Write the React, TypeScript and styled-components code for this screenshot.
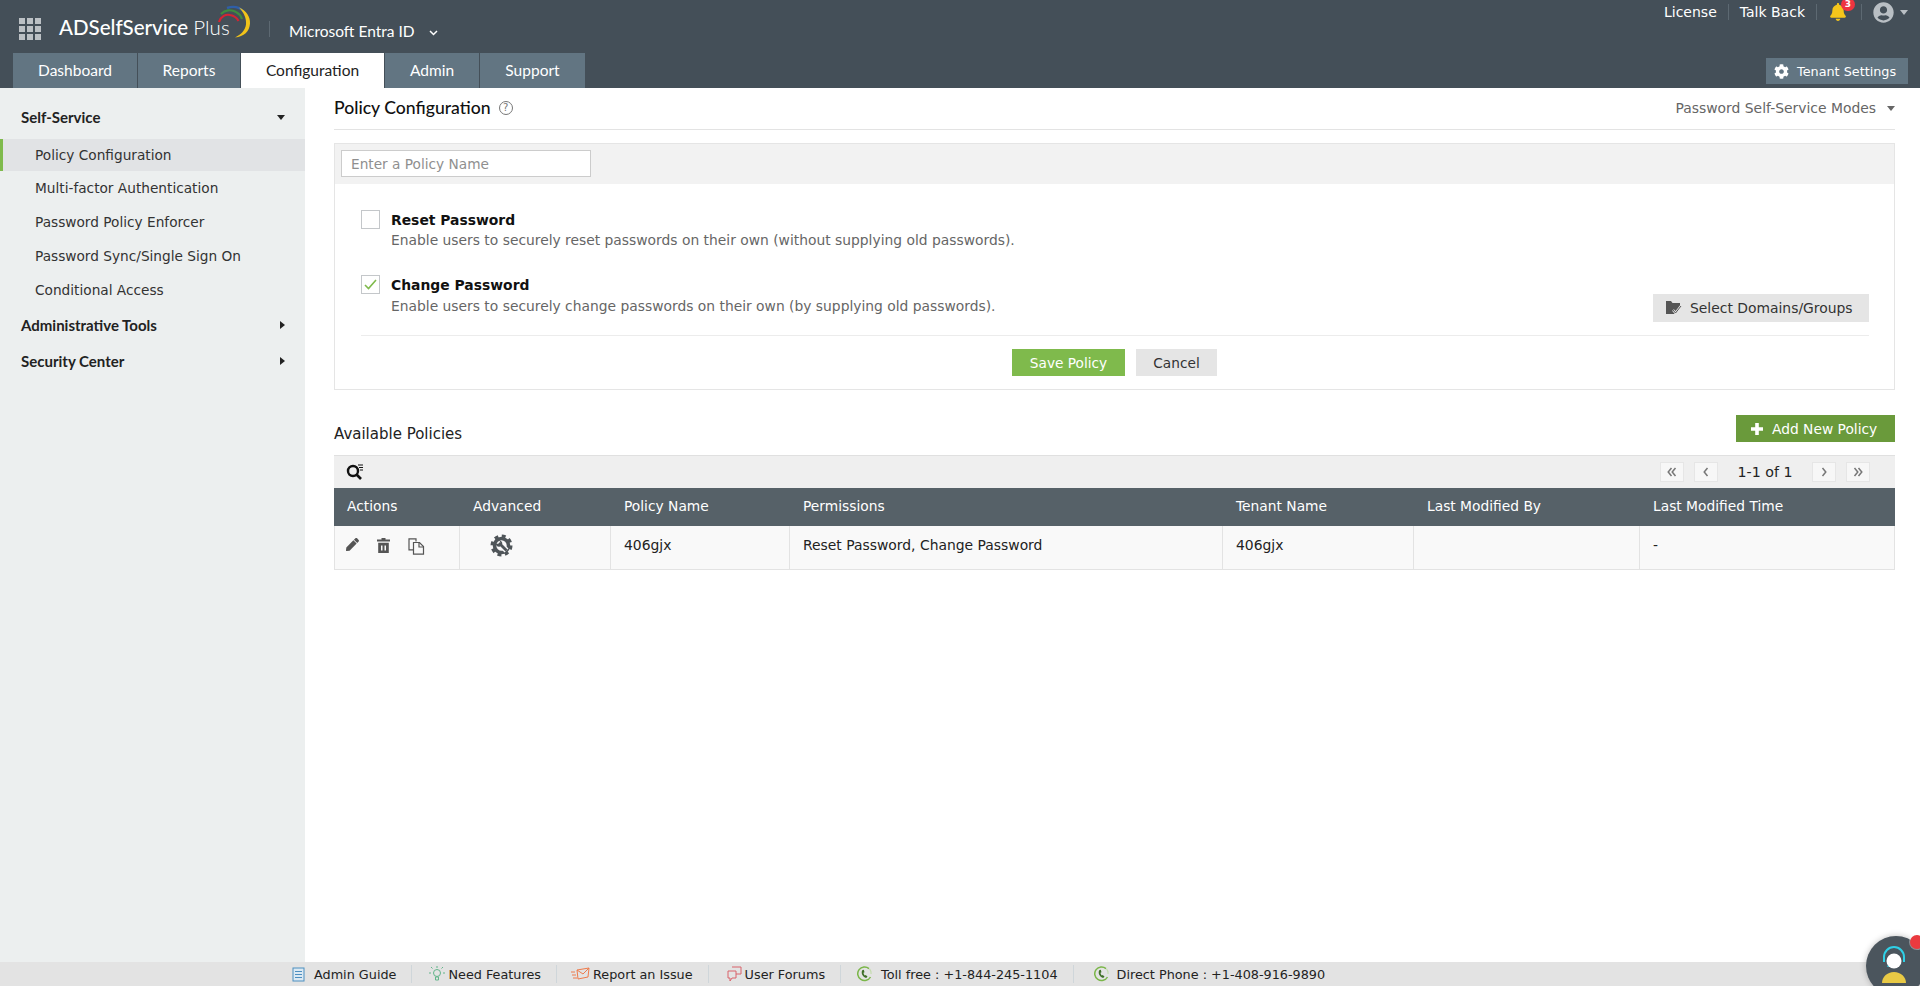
import React from 'react'
import styled, { createGlobalStyle } from 'styled-components'
import { FaCog, FaPen, FaBell, FaUserCircle } from 'react-icons/fa'

const BODY_FONT = `"DejaVu Sans", Verdana, sans-serif`
const HEAD_FONT = `Lato, "Open Sans", sans-serif`

const GlobalStyle = createGlobalStyle`
  html, body { margin: 0; padding: 0; height: 100%; background: #fff; overflow: hidden; }
  #root { height: 100%; }
  * { box-sizing: border-box; }
  body { font-family: ${BODY_FONT}; font-size: 13.8px; color: #222; }
`

const Page = styled.div`
  height: 986px;
  display: flex;
  flex-direction: column;
  position: relative;
  overflow: hidden;
`

const Header = styled.header`
  height: 88px;
  background: #444f58;
  display: flex;
  flex-direction: column;
  flex-shrink: 0;
`

const HeaderTop = styled.div`
  height: 53px;
  display: flex;
  align-items: flex-start;
  padding-left: 19px;
`

const AppGrid = styled.div`
  width: 22px;
  height: 22px;
  margin-top: 18px;
  display: grid;
  grid-template-columns: repeat(3, 6px);
  grid-auto-rows: 6px;
  gap: 2px;
  span { background: #bcc1c5; }
`

const LogoWrap = styled.div`
  position: relative;
  margin-left: 18px;
  width: 194px;
  height: 53px;
`

const LogoText = styled.span`
  position: absolute;
  left: 0;
  top: 14px;
  font-family: ${HEAD_FONT};
  font-size: 20.5px;
  line-height: 26px;
  color: #fff;
  white-space: nowrap;
  font-weight: 500;
  em { font-style: normal; font-weight: 300; }
`

const LogoArc = styled.svg`
  position: absolute;
  left: 159px;
  top: 5px;
`

const HeaderSep = styled.div`
  width: 1px;
  height: 16px;
  background: #5d6972;
  margin: 21px 19px 0 16px;
`

const Product = styled.div`
  margin-top: 19px;
  display: flex;
  align-items: center;
  gap: 14px;
  font-family: ${HEAD_FONT};
  font-size: 15.5px;
  line-height: 24px;
  color: #fff;
  svg { margin-top: 3px; }
`

const TopLinks = styled.div`
  margin-left: auto;
  height: 24px;
  padding-right: 12px;
  display: flex;
  align-items: center;
  color: #fff;
  font-size: 14px;
`

const TopLink = styled.span`
  padding: 0 11px 0 11px;
  line-height: 16px;
  border-right: 1px solid #5d6972;
  white-space: nowrap;
`

const BellWrap = styled.span`
  position: relative;
  width: 45px;
  height: 16px;
  padding-left: 12px;
  border-right: 1px solid #5d6972;
  color: #f5c61b;
  font-size: 18px;
  display: flex;
  align-items: center;
`

const Badge = styled.span`
  position: absolute;
  left: 24px;
  top: -6px;
  width: 14px;
  height: 13px;
  border-radius: 7px;
  background: #ee3440;
  color: #fff;
  font-size: 9px;
  font-weight: 700;
  line-height: 13px;
  text-align: center;
`

const UserWrap = styled.span`
  display: flex;
  align-items: center;
  gap: 6px;
  margin-left: 11px;
  color: #b9bfc4;
`

const TabRow = styled.nav`
  height: 35px;
  display: flex;
  padding: 0 12px 0 13px;
`

const Tab = styled.div<{ $w: number; $active?: boolean }>`
  width: ${(p) => p.$w}px;
  margin-right: 1px;
  padding-bottom: 2px;
  display: flex;
  align-items: center;
  justify-content: center;
  font-family: ${HEAD_FONT};
  font-size: 15.5px;
  background: ${(p) => (p.$active ? '#fff' : '#627582')};
  color: ${(p) => (p.$active ? '#222' : '#fff')};
`

const TenantButton = styled.div`
  margin: 5px 0 4px auto;
  width: 142px;
  display: flex;
  align-items: center;
  gap: 8px;
  padding-left: 8px;
  background: #627582;
  color: #fff;
  font-size: 12.8px;
  white-space: nowrap;
`

const Body = styled.div`
  flex: 1;
  display: flex;
  min-height: 0;
`

const Sidebar = styled.aside`
  width: 305px;
  background: #ecefef;
  flex-shrink: 0;
  padding-top: 11px;
`

const SectionHead = styled.div<{ $mt?: number }>`
  height: 36px;
  margin-top: ${(p) => p.$mt ?? 0}px;
  padding: 0 20px 0 21px;
  display: flex;
  align-items: center;
  justify-content: space-between;
  font-family: ${HEAD_FONT};
  font-weight: 700;
  font-size: 15px;
  color: #222;
`

const Caret = styled.span<{ $dir: 'down' | 'right'; $color?: string }>`
  width: 0;
  height: 0;
  ${(p) =>
    p.$dir === 'down'
      ? `border-left: 4px solid transparent; border-right: 4px solid transparent; border-top: 5px solid ${p.$color ?? '#222'};`
      : `border-top: 4px solid transparent; border-bottom: 4px solid transparent; border-left: 5px solid ${p.$color ?? '#222'};`}
`

const MenuItem = styled.div<{ $active?: boolean }>`
  height: ${(p) => (p.$active ? '32px' : '34px')};
  margin-top: ${(p) => (p.$active ? '4px' : '0')};
  display: flex;
  align-items: center;
  padding-left: ${(p) => (p.$active ? '32px' : '35px')};
  font-size: 13.7px;
  color: #333;
  background: ${(p) => (p.$active ? '#e1e3e5' : 'transparent')};
  border-left: ${(p) => (p.$active ? '3px solid #7fba4c' : '0')};
`

const Main = styled.main`
  flex: 1;
  padding: 0 25px 0 29px;
  min-width: 0;
`

const TitleRow = styled.div`
  height: 42px;
  border-bottom: 1px solid #e3e3e3;
  display: flex;
  align-items: center;
  padding-bottom: 3px;
`

const Title = styled.h1`
  margin: 0;
  font-family: ${HEAD_FONT};
  font-size: 17.6px;
  font-weight: 500;
  color: #111;
`

const HelpIcon = styled.span`
  width: 14px;
  height: 14px;
  margin: 2px 0 0 8px;
  border: 1px solid #777;
  border-radius: 50%;
  font-size: 10px;
  line-height: 12px;
  text-align: center;
  color: #777;
`

const ModeSwitch = styled.div`
  margin: 2px 0 0 auto;
  display: flex;
  align-items: center;
  gap: 11px;
  font-size: 13.9px;
  color: #666;
`

const FormPanel = styled.section`
  margin-top: 13px;
  height: 247px;
  border: 1px solid #e5e5e5;
`

const NameBar = styled.div`
  height: 40px;
  background: #f2f2f2;
  padding: 6px;
`

const NameInput = styled.input`
  display: block;
  width: 250px;
  height: 27px;
  border: 1px solid #ccc;
  background: #fff;
  padding: 0 9px;
  font-family: ${BODY_FONT};
  font-size: 13.7px;
  &::placeholder { color: #8f8f8f; opacity: 1; }
`

const FormBody = styled.div`
  padding: 26px 25px 0 26px;
`

const Option = styled.div<{ $h: number }>`
  height: ${(p) => p.$h}px;
  display: flex;
`

const CheckBox = styled.span`
  width: 19px;
  height: 19px;
  border: 1px solid #c4c7ca;
  background: #fff;
  flex-shrink: 0;
  margin-right: 11px;
  display: flex;
  align-items: center;
  justify-content: center;
`

const OptionLabel = styled.div`
  font-weight: 700;
  font-size: 13.9px;
  line-height: 20px;
  color: #111;
`

const OptionDesc = styled.div<{ $mt?: number }>`
  margin-top: ${(p) => p.$mt ?? 0}px;
  font-size: 13.85px;
  line-height: 20px;
  color: #666;
  white-space: nowrap;
`

const SelectButton = styled.div`
  margin: 0 0 1px auto;
  align-self: flex-end;
  width: 216px;
  height: 28px;
  background: #e5e5e5;
  display: flex;
  align-items: center;
  gap: 8px;
  padding-left: 13px;
  font-size: 13.9px;
  color: #333;
  white-space: nowrap;
`

const Divider = styled.div`
  height: 1px;
  background: #ececec;
  margin-top: 12px;
`

const FormActions = styled.div`
  margin-top: 13px;
  display: flex;
  justify-content: center;
  gap: 11px;
  padding-right: 1px;
`

const ActionButton = styled.div<{ $w: number; $primary?: boolean }>`
  width: ${(p) => p.$w}px;
  height: 27px;
  display: flex;
  align-items: center;
  justify-content: center;
  font-size: 13.7px;
  background: ${(p) => (p.$primary ? '#7fba4c' : '#e5e5e5')};
  color: ${(p) => (p.$primary ? '#fff' : '#333')};
`

const ListHead = styled.div`
  margin-top: 25px;
  height: 27px;
  display: flex;
  justify-content: space-between;
  align-items: flex-end;
`

const ListTitle = styled.h2`
  margin: 0 0 -2px;
  font-size: 15px;
  font-weight: 400;
  line-height: 20px;
  color: #222;
`

const AddButton = styled.div`
  width: 159px;
  height: 27px;
  background: #6a9a3b;
  color: #fff;
  display: flex;
  align-items: center;
  gap: 9px;
  padding-left: 15px;
  font-size: 13.8px;
  white-space: nowrap;
`

const TableBar = styled.div`
  margin-top: 13px;
  height: 33px;
  background: #efefef;
  border-top: 1px solid #e0e0e0;
  display: flex;
  align-items: center;
  padding: 0 25px 0 12px;
`

const Pager = styled.div`
  margin-left: auto;
  display: flex;
  align-items: center;
  gap: 10px;
`

const PageButton = styled.span`
  width: 24px;
  height: 20px;
  background: #f7f7f7;
  border: 1px solid #e6e6e6;
  color: #777;
  display: flex;
  align-items: center;
  justify-content: center;
`

const PageInfo = styled.span`
  width: 74px;
  text-align: center;
  font-size: 14.2px;
  color: #222;
`

const HeadRow = styled.div`
  display: grid;
  grid-template-columns: 126px 151px 179px 433px 191px 226px 255px;
  height: 38px;
  padding-bottom: 2px;
  background: #566168;
  color: #fff;
  font-size: 13.8px;
  align-items: center;
`

const HeadCell = styled.div`
  padding-left: 13px;
  white-space: nowrap;
`

const DataRow = styled.div`
  display: grid;
  grid-template-columns: 125px 151px 179px 433px 191px 226px 254px;
  height: 44px;
  background: #f9f9f9;
  border-bottom: 1px solid #e3e3e3;
  border-left: 1px solid #e3e3e3;
  border-right: 1px solid #e3e3e3;
  font-size: 13.9px;
  color: #222;
`

const DataCell = styled.div<{ $last?: boolean }>`
  padding: 9px 0 0 13px;
  line-height: 20px;
  border-right: ${(p) => (p.$last ? '0' : '1px solid #e3e3e3')};
  white-space: nowrap;
`

const ActionCell = styled.div`
  padding: 12px 0 0 11px;
  display: flex;
  gap: 18px;
  color: #555;
  border-right: 1px solid #e3e3e3;
  align-items: flex-start;
`

const AdvancedCell = styled.div`
  padding: 8px 0 0 30px;
  border-right: 1px solid #e3e3e3;
`

const Footer = styled.footer`
  height: 24px;
  background: #e3e3e3;
  flex-shrink: 0;
  display: flex;
  align-items: center;
  padding-left: 292px;
  font-size: 12.8px;
  color: #222;
`

const FootItem = styled.div<{ $gap: number; $pr: number; $ml: number; $last?: boolean }>`
  display: flex;
  align-items: center;
  gap: ${(p) => p.$gap}px;
  padding-right: ${(p) => p.$pr}px;
  margin-right: ${(p) => p.$ml}px;
  height: 18px;
  white-space: nowrap;
  border-right: ${(p) => (p.$last ? '0' : '1px solid #cfd6da')};
`

const ChatBubble = styled.div`
  position: absolute;
  left: 1866px;
  top: 936px;
  width: 60px;
  height: 60px;
  border-radius: 50%;
  background: #4b555d;
  box-shadow: 0 0 6px rgba(0, 0, 0, 0.25);
  overflow: hidden;
`

const ChatDot = styled.span`
  position: absolute;
  left: 1910px;
  top: 935px;
  width: 14px;
  height: 14px;
  border-radius: 50%;
  background: #ea3a3f;
  box-shadow: 0 0 0 1px rgba(255, 255, 255, 0.35);
`

const PhoneIcon = () => (
  <svg width="15" height="16" viewBox="0 0 15 16" fill="none">
    <path d="M12 2.600A6.800 6.800 0 1 0 13.500 11" stroke="#7ab648" strokeWidth="1.500" />
    <path d="M12.500 2.800A6.800 6.800 0 0 1 14 8" stroke="#c4dcae" strokeWidth="1.200" />
    <path d="M5.200 4.200c-1 1.800-.5 4 .9 5.800 1 1.200 2.300 2 3.500 1.700l.9-1.300-1.800-1.400-.8.5c-.8-.6-1.300-1.800-1.400-2.800l1-.5-.7-2.400z" fill="#3f6f28" />
  </svg>
)

const ChevronPair = ({ dir }: { dir: 'left' | 'right' }) => (
  <svg width="10" height="10" viewBox="0 0 10 10" fill="none" stroke="#777" strokeWidth="1.500">
    {dir === 'left' ? (
      <>
        <path d="M4.500 1 1.200 5l3.300 4" />
        <path d="M8.500 1 5.200 5l3.300 4" />
      </>
    ) : (
      <>
        <path d="M1.500 1 4.800 5 1.500 9" />
        <path d="M5.500 1 8.800 5 5.500 9" />
      </>
    )}
  </svg>
)

const Chevron = ({ dir }: { dir: 'left' | 'right' }) => (
  <svg width="8" height="10" viewBox="0 0 8 10" fill="none" stroke="#777" strokeWidth="1.500">
    <path d={dir === 'left' ? 'M5.500 1 2.200 5l3.300 4' : 'M2.500 1 5.800 5 2.500 9'} />
  </svg>
)

const menuItems = ['Policy Configuration', 'Multi-factor Authentication', 'Password Policy Enforcer', 'Password Sync/Single Sign On', 'Conditional Access']

const columns = ['Actions', 'Advanced', 'Policy Name', 'Permissions', 'Tenant Name', 'Last Modified By', 'Last Modified Time']

export default function App() {
  return (
    <Page>
      <GlobalStyle />
      <Header>
        <HeaderTop>
          <AppGrid>
            {Array.from({ length: 9 }).map((_, i) => (
              <span key={i} />
            ))}
          </AppGrid>
          <LogoWrap>
            <LogoText>
              ADSelfService <em>Plus</em>
            </LogoText>
            <LogoArc width="36" height="36" viewBox="0 0 36 36" fill="none">
              <path d="M1 17C3 11 8 9 12 10c4 .6 7 3 8.500 6" stroke="#d32433" strokeWidth="2.200" />
              <path d="M3 9c4-4 10-5 15-2 3 1.500 5 4 6 7" stroke="#3f8c3f" strokeWidth="2.200" />
              <path d="M9 3c6-2 12-1 16 3 3 3 4 6 4 9" stroke="#2f5fa8" strokeWidth="2.400" />
              <path d="M21 2.500c7 3 11.500 9 11 16-.500 8-6 13-15 14 6-3 10-7 11-13 .6-6-2-12-7-17z" fill="#f1c31a" />
            </LogoArc>
          </LogoWrap>
          <HeaderSep />
          <Product>
            Microsoft Entra ID
            <svg width="9" height="6" viewBox="0 0 9 6" fill="none" stroke="#fff" strokeWidth="1.500">
              <path d="M1 1l3.500 3.500L8 1" />
            </svg>
          </Product>
          <TopLinks>
            <TopLink>License</TopLink>
            <TopLink>Talk Back</TopLink>
            <BellWrap>
              <FaBell />
              <Badge>3</Badge>
            </BellWrap>
            <UserWrap>
              <FaUserCircle size={21} />
              <Caret $dir="down" $color="#b9bfc4" />
            </UserWrap>
          </TopLinks>
        </HeaderTop>
        <TabRow>
          <Tab $w={124}>Dashboard</Tab>
          <Tab $w={102}>Reports</Tab>
          <Tab $w={143} $active>
            Configuration
          </Tab>
          <Tab $w={94}>Admin</Tab>
          <Tab $w={105}>Support</Tab>
          <TenantButton>
            <FaCog size={15} />
            Tenant Settings
          </TenantButton>
        </TabRow>
      </Header>
      <Body>
        <Sidebar>
          <SectionHead>
            Self-Service
            <Caret $dir="down" />
          </SectionHead>
          {menuItems.map((label, i) => (
            <MenuItem key={label} $active={i === 0}>
              {label}
            </MenuItem>
          ))}
          <SectionHead>
            Administrative Tools
            <Caret $dir="right" />
          </SectionHead>
          <SectionHead>
            Security Center
            <Caret $dir="right" />
          </SectionHead>
        </Sidebar>
        <Main>
          <TitleRow>
            <Title>Policy Configuration</Title>
            <HelpIcon>?</HelpIcon>
            <ModeSwitch>
              Password Self-Service Modes
              <Caret $dir="down" $color="#666" />
            </ModeSwitch>
          </TitleRow>
          <FormPanel>
            <NameBar>
              <NameInput placeholder="Enter a Policy Name" />
            </NameBar>
            <FormBody>
              <Option $h={65}>
                <CheckBox />
                <div>
                  <OptionLabel>Reset Password</OptionLabel>
                  <OptionDesc>Enable users to securely reset passwords on their own (without supplying old passwords).</OptionDesc>
                </div>
              </Option>
              <Option $h={48}>
                <CheckBox>
                  <svg width="13" height="11" viewBox="0 0 13 11" fill="none" stroke="#7fba4c" strokeWidth="1.600">
                    <path d="M1 6l3.500 3.500L12 1" />
                  </svg>
                </CheckBox>
                <div>
                  <OptionLabel>Change Password</OptionLabel>
                  <OptionDesc $mt={1}>Enable users to securely change passwords on their own (by supplying old passwords).</OptionDesc>
                </div>
                <SelectButton>
                  <svg width="16" height="14" viewBox="0 0 16 14">
                    <path d="M0 0h5l1.500 2H14v5l-5 6H0z" fill="#555" />
                    <path d="M7 9l2.500 3L15 5" stroke="#e5e5e5" strokeWidth="2.400" fill="none" />
                    <path d="M7 9l2.500 3L15 5" stroke="#555" strokeWidth="1" fill="none" />
                  </svg>
                  Select Domains/Groups
                </SelectButton>
              </Option>
              <Divider />
              <FormActions>
                <ActionButton $w={113} $primary>
                  Save Policy
                </ActionButton>
                <ActionButton $w={81}>Cancel</ActionButton>
              </FormActions>
            </FormBody>
          </FormPanel>
          <ListHead>
            <ListTitle>Available Policies</ListTitle>
            <AddButton>
              <svg width="12" height="12" viewBox="0 0 12 12" fill="#fff">
                <path d="M4.200 0h3.600v4.200H12v3.600H7.800V12H4.200V7.800H0V4.200h4.200z" />
              </svg>
              Add New Policy
            </AddButton>
          </ListHead>
          <TableBar>
            <svg width="18" height="18" viewBox="0 0 18 18" fill="none">
              <circle cx="7" cy="8" r="5" stroke="#111" strokeWidth="2.400" />
              <path d="M10.500 11.500 15 16" stroke="#111" strokeWidth="2.600" />
              <path d="M12 2h5M13 4.500h4M14 7h3" stroke="#111" strokeWidth="1" />
            </svg>
            <Pager>
              <PageButton>
                <ChevronPair dir="left" />
              </PageButton>
              <PageButton>
                <Chevron dir="left" />
              </PageButton>
              <PageInfo>1-1 of 1</PageInfo>
              <PageButton>
                <Chevron dir="right" />
              </PageButton>
              <PageButton>
                <ChevronPair dir="right" />
              </PageButton>
            </Pager>
          </TableBar>
          <HeadRow>
            {columns.map((c) => (
              <HeadCell key={c}>{c}</HeadCell>
            ))}
          </HeadRow>
          <DataRow>
            <ActionCell>
              <FaPen size={13} />
              <svg width="13" height="15" viewBox="0 0 13 15" fill="#555">
                <path d="M4.500 0h4v1.500H13V3.500H0V1.500h4.500z" />
                <path d="M1.200 4.800h10.600V15H1.200zM4 7.500v5h1.500v-5zM7.500 7.500v5H9v-5z" fillRule="evenodd" />
              </svg>
              <svg width="17" height="17" viewBox="0 0 17 17" fill="none" stroke="#555" strokeWidth="1.200">
                <path d="M8 3.500V.8H1v11h4" />
                <path d="M5.500 4.500h6l4 4v7.700H5.500z" />
                <path d="M11 4.500V9h4.500" />
              </svg>
            </ActionCell>
            <AdvancedCell>
              <svg width="23" height="23" viewBox="0 0 23 23" fill="none">
                <circle cx="11.500" cy="11.500" r="7" stroke="#4f5559" strokeWidth="3.600" />
                <circle cx="11.500" cy="11.500" r="9.500" stroke="#4f5559" strokeWidth="3" strokeDasharray="3.900 3.560" />
                <path d="M8.500 8.500l8 8" stroke="#f9f9f9" strokeWidth="5.400" />
                <path d="M9 9l7.500 7.500" stroke="#4f5559" strokeWidth="2.800" />
                <path d="M5.500 9.500c.5 2.500 3 4 4.500 3l2-2c1-1.500-.5-4-3-4.500l1.500 2.500-1.500 1.500z" fill="#4f5559" />
              </svg>
            </AdvancedCell>
            <DataCell>406gjx</DataCell>
            <DataCell>Reset Password, Change Password</DataCell>
            <DataCell>406gjx</DataCell>
            <DataCell />
            <DataCell $last>-</DataCell>
          </DataRow>
        </Main>
      </Body>
      <Footer>
        <FootItem $gap={9} $pr={15} $ml={17}>
          <svg width="13" height="15" viewBox="0 0 13 15" fill="#dbe9f3" stroke="#4d8fc0">
            <rect x="1" y="1" width="11" height="13" />
            <path d="M3 4.500h7M3 7.500h7M3 10.500h7" />
          </svg>
          Admin Guide
        </FootItem>
        <FootItem $gap={3} $pr={15} $ml={14}>
          <svg width="16" height="16" viewBox="0 0 16 16" fill="none" stroke="#62b58a">
            <circle cx="8" cy="7" r="3.500" />
            <path d="M6.500 11h3v3h-3zM8 0v2M2 7H0M16 7h-2M3.500 2.500 2 1M12.500 2.500 14 1" />
          </svg>
          Need Features
        </FootItem>
        <FootItem $gap={3} $pr={15} $ml={18}>
          <svg width="19" height="14" viewBox="0 0 19 14" fill="none" stroke="#ee7b4c">
            <path d="M6 3l12-2-1 9-10 2zM6 3l6 4 6-6M0 5h4M1 8h4M2 11h4" />
          </svg>
          Report an Issue
        </FootItem>
        <FootItem $gap={3} $pr={15} $ml={16}>
          <svg width="15" height="16" viewBox="0 0 15 16" fill="none" stroke="#d9636b">
            <path d="M5 1h9v7H9M1 5h8v7H5l-2 3v-3H1z" />
          </svg>
          User Forums
        </FootItem>
        <FootItem $gap={9} $pr={15} $ml={20}>
          <PhoneIcon />
          Toll free : +1-844-245-1104
        </FootItem>
        <FootItem $gap={8} $pr={0} $ml={0} $last>
          <PhoneIcon />
          Direct Phone : +1-408-916-9890
        </FootItem>
      </Footer>
      <ChatBubble>
        <svg width="60" height="50" viewBox="0 0 60 50" fill="none">
          <path d="M18 26v-5a10 10 0 0 1 20 0v5" stroke="#2fd0e6" strokeWidth="2" />
          <path d="M21 30c5 1 10 0 14-3" stroke="#2fd0e6" strokeWidth="1.200" />
          <circle cx="28" cy="25" r="7.500" fill="#fff" />
          <path d="M16 47c0-6 5-11 12-11s12 5 12 11z" fill="#e8c945" />
        </svg>
      </ChatBubble>
      <ChatDot />
    </Page>
  )
}
